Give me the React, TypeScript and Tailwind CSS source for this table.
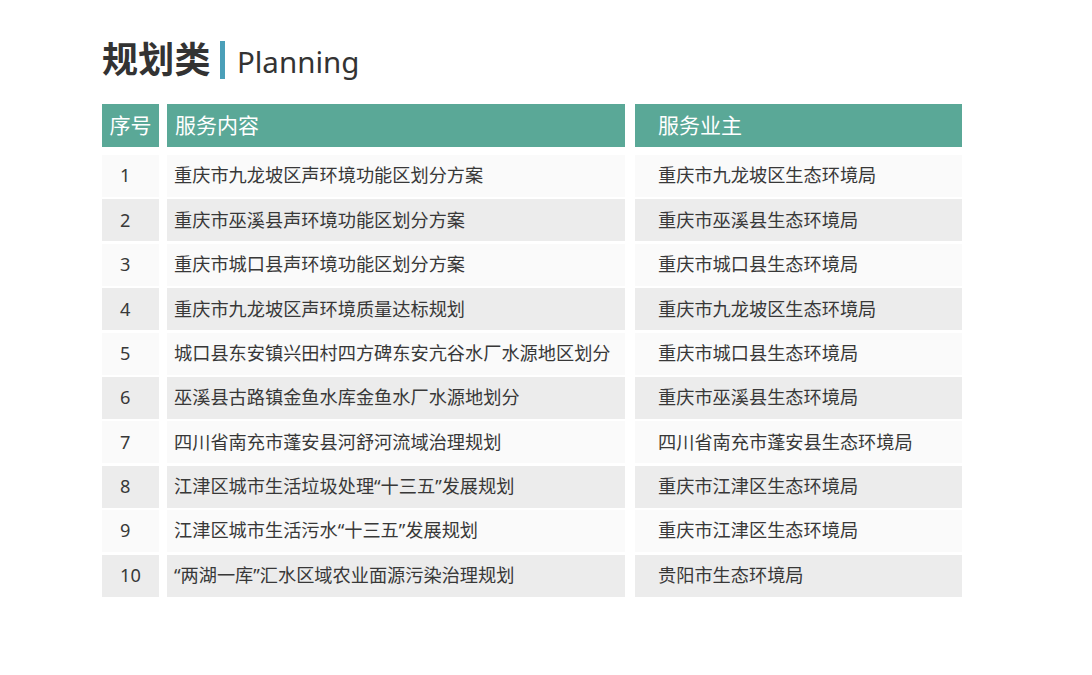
const rows: [string, string][] = [
  ['重庆市九龙坡区声环境功能区划分方案', '重庆市九龙坡区生态环境局'],
  ['重庆市巫溪县声环境功能区划分方案', '重庆市巫溪县生态环境局'],
  ['重庆市城口县声环境功能区划分方案', '重庆市城口县生态环境局'],
  ['重庆市九龙坡区声环境质量达标规划', '重庆市九龙坡区生态环境局'],
  ['城口县东安镇兴田村四方碑东安亢谷水厂水源地区划分', '重庆市城口县生态环境局'],
  ['巫溪县古路镇金鱼水库金鱼水厂水源地划分', '重庆市巫溪县生态环境局'],
  ['四川省南充市蓬安县河舒河流域治理规划', '四川省南充市蓬安县生态环境局'],
  ['江津区城市生活垃圾处理“十三五”发展规划', '重庆市江津区生态环境局'],
  ['江津区城市生活污水“十三五”发展规划', '重庆市江津区生态环境局'],
  ['“两湖一库”汇水区域农业面源污染治理规划', '贵阳市生态环境局'],
];

export default function App() {
  return (
    <div
      className="w-[1092px] h-[675px] bg-white text-[#383838] pl-[102px] pt-[38px]"
      style={{ fontFamily: '"Noto Sans", "Noto Sans CJK SC", sans-serif' }}
    >
      {/* Title */}
      <div className="flex items-center h-[44px]">
        <h1 className="text-[36px] font-bold leading-none text-[#333] tracking-[0.3px]">规划类</h1>
        <div className="w-[5px] h-[38px] bg-[#4a9fb8] ml-[9px] mr-[12px]" />
        <span className="text-[29.5px] leading-none text-[#333] pt-[3px]">Planning</span>
      </div>

      {/* Table */}
      <div className="mt-[22px] w-[861px]">
        <div className="flex h-[43px] text-white text-[21px]">
          <div className="w-[57px] bg-[#5aa897] flex items-center justify-center">序号</div>
          <div className="w-[458px] ml-[8px] bg-[#5aa897] flex items-center pl-[8px]">服务内容</div>
          <div className="w-[327px] ml-[10px] bg-[#5aa897] flex items-center pl-[23px]">服务业主</div>
        </div>
        <div className="mt-[7px] flex flex-col gap-y-[1.4px]">
          {rows.map(([a, b], i) => {
            const bg = i % 2 === 0 ? 'bg-[#fafafa]' : 'bg-[#ececec]';
            return (
              <div key={i} className="flex h-[43px] text-[18.2px] pt-[1px]">
                <div className={`${bg} w-[57px] flex items-center pl-[18px]`}>{i + 1}</div>
                <div className={`${bg} w-[458px] ml-[8px] flex items-center pl-[7px]`}>{a}</div>
                <div className={`${bg} w-[327px] ml-[10px] flex items-center pl-[23px]`}>{b}</div>
              </div>
            );
          })}
        </div>
      </div>
    </div>
  );
}
